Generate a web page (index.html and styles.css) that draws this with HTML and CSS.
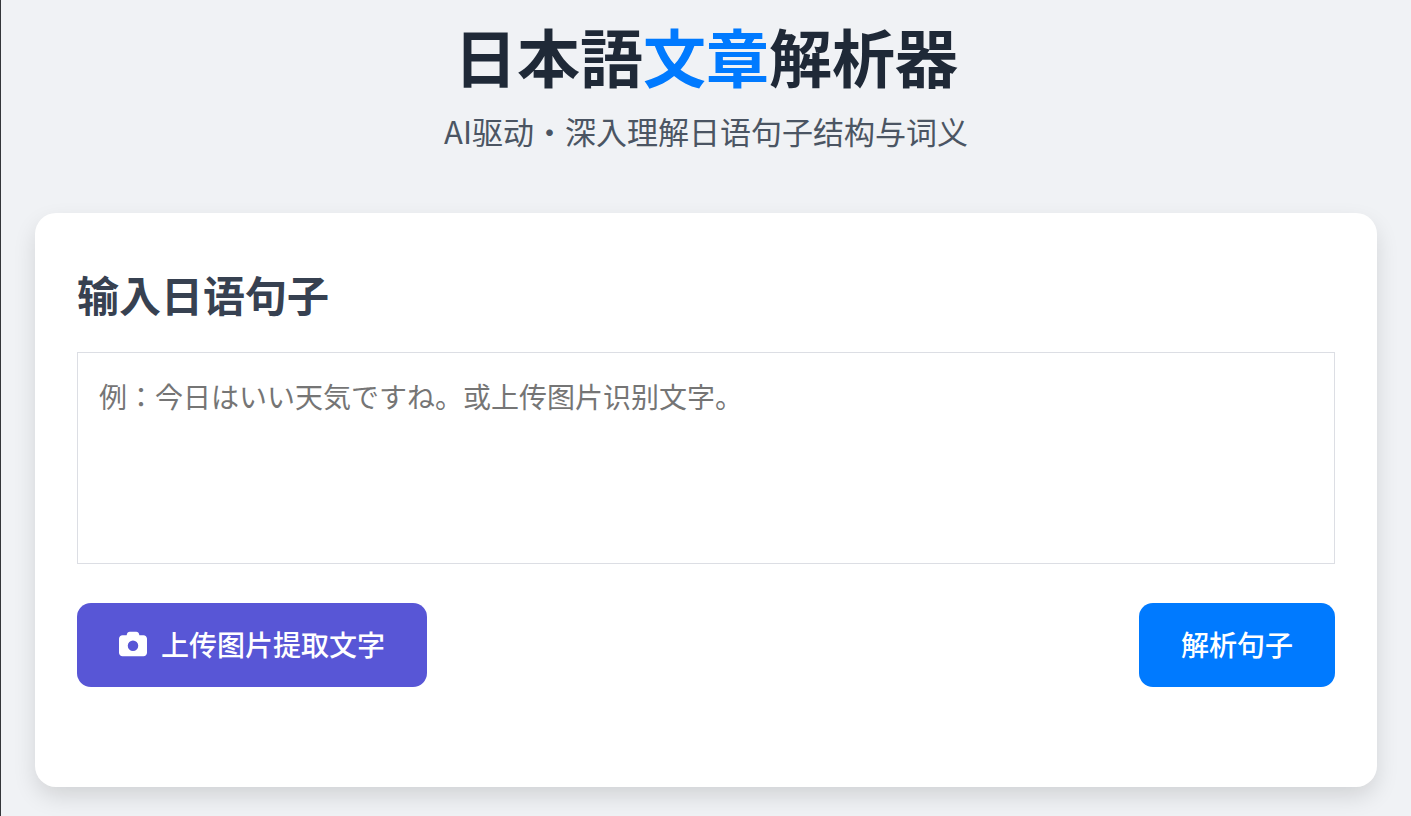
FILE: index.html
```html
<!DOCTYPE html>
<html lang="ja">
<head>
<meta charset="utf-8">
<meta name="viewport" content="width=device-width, initial-scale=1">
<title>日本語文章解析器</title>
<link rel="stylesheet" href="styles.css">
</head>
<body>
<header class="header">
  <h1 class="title">日本語<span class="accent">文章</span>解析器</h1>
  <p class="subtitle">AI驱动・深入理解日语句子结构与词义</p>
</header>
<main class="card">
  <h2 class="card-title"><label for="sentence">输入日语句子</label></h2>
  <textarea class="sentence" id="sentence" placeholder="例：今日はいい天気ですね。或上传图片识别文字。"></textarea>
  <div class="actions">
    <button class="button upload" type="button">
      <svg class="icon" viewBox="0 0 512 512" aria-hidden="true"><path fill="currentColor" d="M149 65 139 96H64C29 96 0 125 0 160v256c0 35 29 64 64 64h384c35 0 64-29 64-64V160c0-35-29-64-64-64h-75l-10-31C356 45 338 32 317 32H195c-21 0-39 13-46 33zM256 192a96 96 0 1 1 0 192 96 96 0 1 1 0-192z"/></svg>
      <span>上传图片提取文字</span>
    </button>
    <button class="button analyze" type="button">解析句子</button>
  </div>
</main>
</body>
</html>
```

FILE: styles.css
```css
* {
  box-sizing: border-box;
}

body {
  margin: 0;
  min-height: 100vh;
  padding: 14px 34px 28px;
  border-left: 1px solid #34363a;
  background: #f0f2f5;
  color: #1f2937;
  font-family: "Noto Sans CJK JP", sans-serif;
}

.header {
  margin-bottom: 59px;
  text-align: center;
}

.title {
  margin: 0;
  font-size: 63px;
  line-height: 82px;
  font-weight: 700;
}

.accent {
  color: #007aff;
}

.subtitle {
  margin: 12px 0 0;
  color: #4b5563;
  font-size: 31px;
  line-height: 46px;
}

.card {
  padding: 53px 42px 100px;
  border-radius: 21px;
  background: #fff;
  box-shadow: 0 10px 24px -2px rgba(0, 0, 0, 0.14);
}

.card-title {
  margin: 0 0 30px;
  color: #374151;
  font-size: 42px;
  line-height: 56px;
  font-weight: 700;
}

.sentence {
  display: block;
  width: 100%;
  height: 212px;
  padding: 20px 21px;
  border: 1px solid #dcdee4;
  background: #fff;
  color: #1f2937;
  font: inherit;
  font-size: 28px;
  line-height: 46px;
  resize: none;
}

.sentence::placeholder {
  color: #757575;
}

.actions {
  display: flex;
  justify-content: space-between;
  margin-top: 39px;
}

.button {
  display: flex;
  align-items: center;
  gap: 14px;
  padding: 20px 42px 22px;
  border: 0;
  border-radius: 14px;
  color: #fff;
  font: inherit;
  font-size: 28px;
  line-height: 42px;
  font-weight: 500;
}

.upload {
  background: #5856d6;
}

.analyze {
  background: #007aff;
}

.icon {
  width: 28px;
  height: 28px;
}
```
